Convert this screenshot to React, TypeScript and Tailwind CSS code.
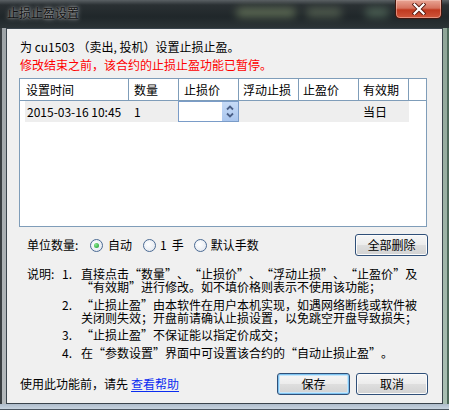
import React from "react";

const F = "font-['Noto_Sans_CJK_SC',sans-serif]";

function Q({ t }: { t: string }) {
  return (
    <>
      {t.split(/([“”])/).map((p, i) =>
        p === "“" ? (
          <span key={i} className="inline-block w-[12px] text-right">
            “
          </span>
        ) : p === "”" ? (
          <span key={i} className="inline-block w-[12px] text-left">
            ”
          </span>
        ) : (
          <React.Fragment key={i}>{p}</React.Fragment>
        )
      )}
    </>
  );
}

function Radio({ checked }: { checked?: boolean }) {
  return (
    <span className="w-[13px] h-[13px] shrink-0 rounded-full border border-[#4a6a93] bg-[radial-gradient(circle_at_40%_40%,#ffffff,#dde3ec)] flex items-center justify-center">
      {checked && (
        <span className="w-[5px] h-[5px] rounded-full bg-[radial-gradient(circle_at_35%_35%,#8ae88e,#169a2a)]" />
      )}
    </span>
  );
}

function Btn({ label, w, def }: { label: string; w: string; def?: boolean }) {
  return (
    <div
      className={
        "h-[22px] rounded-[3px] border border-[#2f4f78] bg-[linear-gradient(to_bottom,#f6f6f6,#ececec_48%,#dedede_52%,#d2d2d2)] flex items-center justify-center text-[12px] leading-none text-black " +
        w +
        (def
          ? " shadow-[inset_0_0_0_1px_#7ec3f0,inset_0_0_0_2px_#c6e6fb]"
          : " shadow-[inset_0_0_0_1px_#fbfbfb]")
      }
    >
      {label}
    </div>
  );
}

export default function App() {
  return (
    <div
      lang="zh-CN"
      className={
        "w-[449px] h-[410px] flex flex-col overflow-hidden bg-[#7d8a90] text-black " + F
      }
    >
      {/* title bar */}
      <div className="relative h-[28px] flex items-start justify-between bg-[linear-gradient(to_bottom,#5a6064,#2a3033_5px,#20272a_60%,#2b3336)]">
        <span className="absolute left-[236px] top-[8px] w-[60px] h-[9px] rounded-full bg-[#6f7f60] blur-[4px] opacity-80" />
        <span className="absolute left-[306px] top-[8px] w-[36px] h-[9px] rounded-full bg-[#66745e] blur-[4px] opacity-70" />
        <span className="absolute left-[365px] top-[8px] w-[24px] h-[9px] rounded-full bg-[#5f7a66] blur-[4px] opacity-70" />
        <span className="relative pl-[7px] pt-[5px] text-[12px] leading-[16px] text-[#111] [text-shadow:0_0_5px_rgba(255,255,255,0.65),0_0_2px_rgba(255,255,255,0.5)]">
          止损止盈设置
        </span>
        <div className="relative mr-[7px] w-[47px] h-[19px] rounded-b-[5px] border border-t-0 border-[#40160e] bg-[linear-gradient(to_bottom,#e9a595,#d5725e_45%,#c0391f_55%,#d0573c)] shadow-[inset_0_0_0_1px_rgba(255,220,210,0.45)] flex items-center justify-center">
          <svg width="14" height="12" viewBox="0 0 14 12">
            <path d="M2.5 1.5 L11.5 10.5 M11.5 1.5 L2.5 10.5" stroke="#5a1a10" strokeWidth="4" strokeLinecap="square" />
            <path d="M2.5 1.5 L11.5 10.5 M11.5 1.5 L2.5 10.5" stroke="#ffffff" strokeWidth="2.2" strokeLinecap="square" />
          </svg>
        </div>
      </div>

      <div className="flex h-[376px]">
        <div className="w-[6px] border-l-2 border-[#3a3f42] bg-[linear-gradient(to_bottom,#9ea4a7,#b3b8bb)]" />
        {/* client */}
        <div className="w-[437px] h-[376px] border border-[#3a444c] bg-[#f0f0f0] pl-[12px] pr-[14px] pt-[9px] flex flex-col text-[12px]">
          <div className="pl-px h-[18px] leading-[18px] whitespace-nowrap">
            为 cu1503 （卖出, 投机）设置止损止盈。
          </div>
          <div className="pl-px h-[18px] leading-[18px] whitespace-nowrap text-[#ff0000]">
            修改结束之前，该合约的止损止盈功能已暂停。
          </div>

          {/* table */}
          <div className="mt-[4px] w-[408px] h-[149px] shrink-0 border border-[#7f9db9] bg-white flex flex-col">
            <div className="h-[22px] flex border-b border-[#7f9db9] leading-[21px]">
              <div className="w-[109px] border-r border-[#7f9db9] pl-[6px]">设置时间</div>
              <div className="w-[50px] border-r border-[#7f9db9] pl-[5px]">数量</div>
              <div className="w-[60px] border-r border-[#7f9db9] pl-[5px]">止损价</div>
              <div className="w-[60px] border-r border-[#7f9db9] pl-[4px]">浮动止损</div>
              <div className="w-[60px] border-r border-[#7f9db9] pl-[4px]">止盈价</div>
              <div className="w-[50px] border-r border-[#7f9db9] pl-[4px]">有效期</div>
            </div>
            <div className="ml-[5px] w-[384px] h-[21px] flex bg-[#eeeeee] leading-[21px]">
              <div className="w-[104px] pl-[2px] whitespace-nowrap">2015-03-16 10:45</div>
              <div className="w-[49px] pl-[5px]">1</div>
              <div className="w-[61px] h-[21px] border border-[#7a9cc8] bg-white flex justify-end">
                <div className="w-[16px] h-[19px] bg-[linear-gradient(to_bottom,#c6dbf6,#aac6ee)] flex items-center justify-center">
                  <svg width="16" height="19" viewBox="0 0 16 19">
                    <path d="M5 7.5 L8 4.5 L11 7.5" stroke="#4a5f86" strokeWidth="1.8" fill="none" />
                    <path d="M5 11.5 L8 14.5 L11 11.5" stroke="#4a5f86" strokeWidth="1.8" fill="none" />
                  </svg>
                </div>
              </div>
              <div className="w-[60px]" />
              <div className="w-[60px]" />
              <div className="w-[50px] pl-[4px]">当日</div>
            </div>
          </div>

          {/* unit row */}
          <div className="mt-[7px] h-[22px] flex items-center whitespace-nowrap">
            <span className="w-[71px] pl-[8px]">单位数量:</span>
            <Radio checked />
            <span className="ml-[5px]">自动</span>
            <span className="ml-[11px] flex items-center">
              <Radio />
            </span>
            <span className="ml-[4px]">1</span>
            <span className="ml-[5px]">手</span>
            <span className="ml-[10px] flex items-center">
              <Radio />
            </span>
            <span className="ml-[4px]">默认手数</span>
            <div className="ml-auto">
              <Btn label="全部删除" w="w-[73px]" />
            </div>
          </div>

          {/* explanation */}
          <div className="mt-[11px] flex leading-[13px] whitespace-nowrap">
            <div className="w-[43px] pl-[8px]">说明:</div>
            <div className="flex flex-col">
              <div className="flex">
                <span className="w-[19px]">1.</span>
                <div className="flex flex-col">
                  <span><Q t="直接点击“数量”、“止损价”、“浮动止损”、“止盈价”及" /></span>
                  <span><Q t="“有效期”进行修改。如不填价格则表示不使用该功能；" /></span>
                </div>
              </div>
              <div className="flex mt-[5px]">
                <span className="w-[19px]">2.</span>
                <div className="flex flex-col">
                  <span><Q t="“止损止盈”由本软件在用户本机实现，如遇网络断线或软件被" /></span>
                  <span>关闭则失效；开盘前请确认止损设置，以免跳空开盘导致损失；</span>
                </div>
              </div>
              <div className="flex mt-[4px]">
                <span className="w-[19px]">3.</span>
                <span><Q t="“止损止盈”不保证能以指定价成交；" /></span>
              </div>
              <div className="flex mt-[5px]">
                <span className="w-[19px]">4.</span>
                <span><Q t="在“参数设置”界面中可设置该合约的“自动止损止盈”。" /></span>
              </div>
            </div>
          </div>

          {/* bottom row */}
          <div className="mt-[14px] h-[22px] flex items-center whitespace-nowrap">
            <span className="pl-px">使用此功能前，请先 </span>
            <span className="ml-[3px] text-[#0a2cf0] underline underline-offset-2">查看帮助</span>
            <div className="ml-auto flex gap-[6px]">
              <Btn label="保存" w="w-[73px]" def />
              <Btn label="取消" w="w-[72px]" />
            </div>
          </div>
        </div>
        <div className="w-[6px] border-r-2 border-[#4f6a5c] bg-[linear-gradient(to_bottom,#8fa598,#a9bfb3)]" />
      </div>
      <div className="h-[6px] border-b border-[#4a5560] bg-[linear-gradient(to_bottom,#aebccb,#c8d4e0)]" />
    </div>
  );
}
